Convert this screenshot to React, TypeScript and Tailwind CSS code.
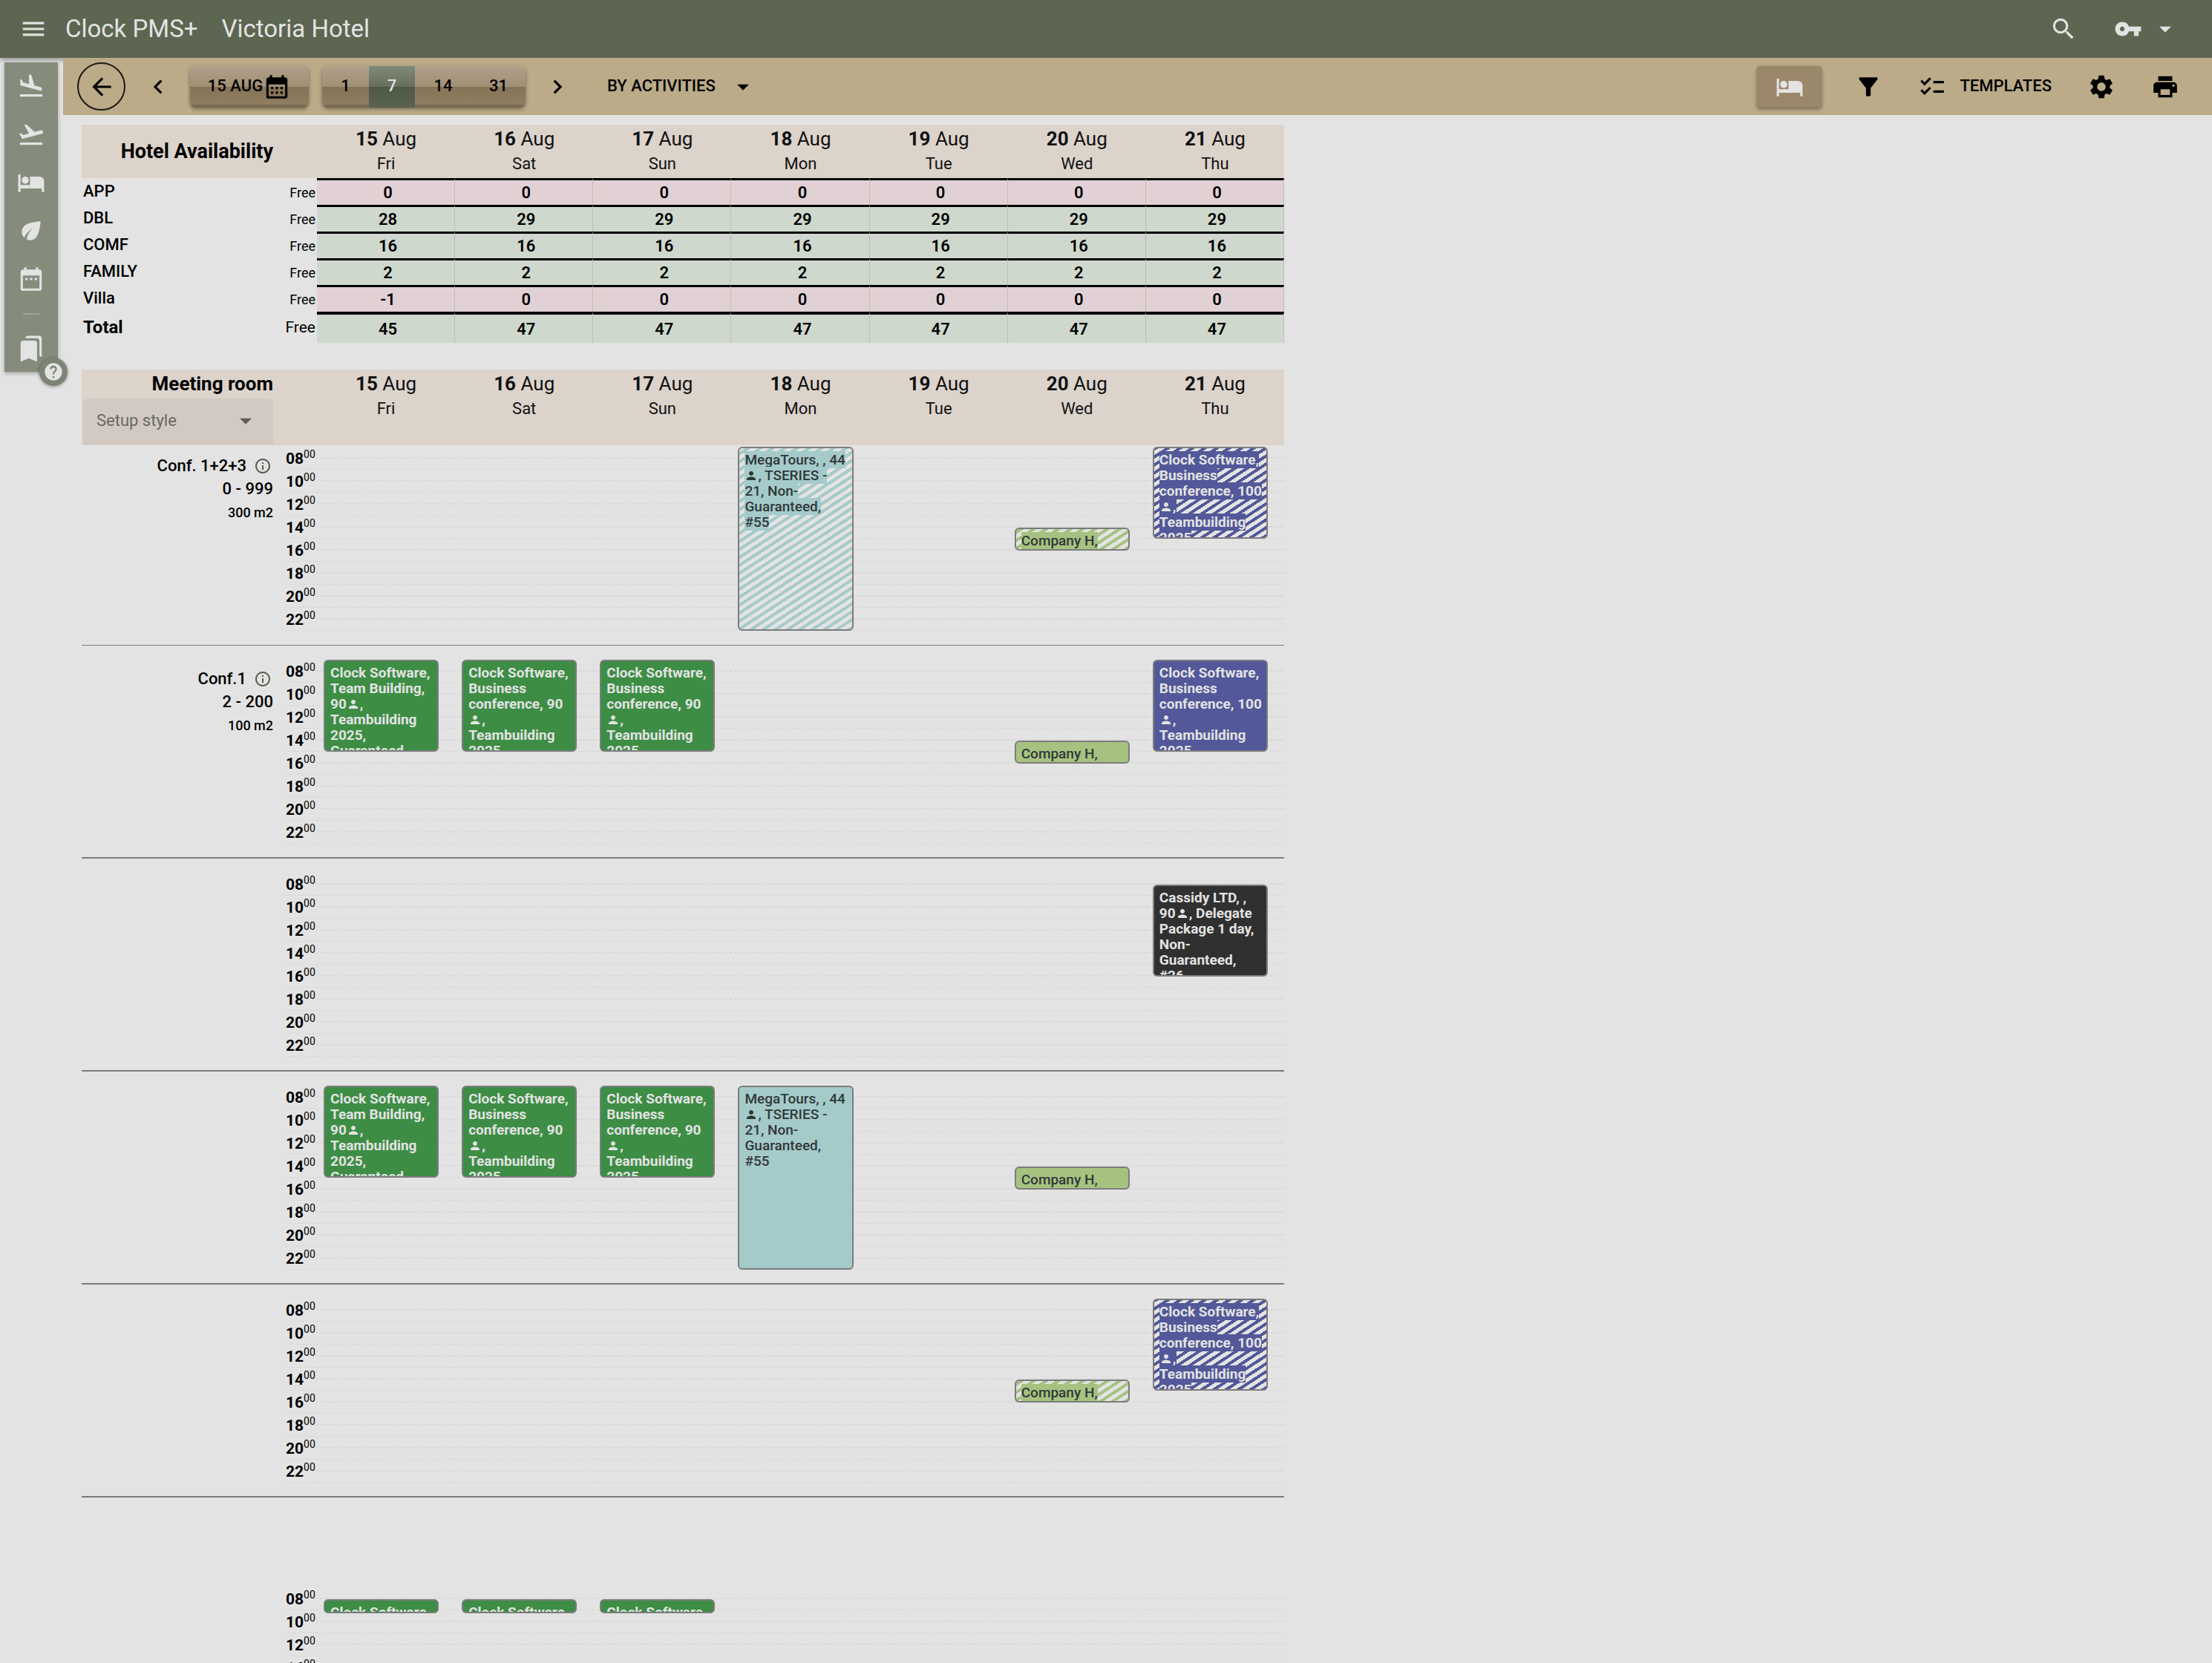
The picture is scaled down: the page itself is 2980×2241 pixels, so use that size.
import type { ReactNode } from "react";
import type { IconType } from "react-icons";
import {
  MdArrowBack,
  MdArrowDropDown,
  MdBookmarks,
  MdCalendarMonth,
  MdChecklist,
  MdChevronLeft,
  MdChevronRight,
  MdDateRange,
  MdEco,
  MdFilterAlt,
  MdFlightLand,
  MdFlightTakeoff,
  MdHelp,
  MdHotel,
  MdInfoOutline,
  MdMenu,
  MdPerson,
  MdPrint,
  MdSearch,
  MdSettings,
  MdVpnKey,
} from "react-icons/md";

const HOUR_HEIGHT = 15.5;
const DAY_START = 7;

const days = [
  { date: "15", weekday: "Fri" },
  { date: "16", weekday: "Sat" },
  { date: "17", weekday: "Sun" },
  { date: "18", weekday: "Mon" },
  { date: "19", weekday: "Tue" },
  { date: "20", weekday: "Wed" },
  { date: "21", weekday: "Thu" },
];

const availability = [
  { type: "APP", free: [0, 0, 0, 0, 0, 0, 0] },
  { type: "DBL", free: [28, 29, 29, 29, 29, 29, 29] },
  { type: "COMF", free: [16, 16, 16, 16, 16, 16, 16] },
  { type: "FAMILY", free: [2, 2, 2, 2, 2, 2, 2] },
  { type: "Villa", free: [-1, 0, 0, 0, 0, 0, 0] },
];

const totals = [45, 47, 47, 47, 47, 47, 47];

const hours = ["08", "10", "12", "14", "16", "18", "20", "22"];

type Tone = "green" | "blue" | "teal" | "lime" | "black";

type Booking = {
  day: number;
  from: number;
  to: number;
  tone: Tone;
  striped?: boolean;
  // "@" stands for the person icon
  lines: string[];
};

type Room = {
  name?: string;
  capacity?: string;
  area?: string;
  bookings: Booking[];
};

const teamBuilding = ["Clock Software,", "Team Building,", "90@,", "Teambuilding", "2025,", "Guaranteed"];
const conference90 = ["Clock Software,", "Business", "conference, 90", "@,", "Teambuilding", "2025"];
const conference100 = ["Clock Software,", "Business", "conference, 100", "@,", "Teambuilding", "2025"];
const megaTours = ["MegaTours, , 44", "@, TSERIES -", "21, Non-", "Guaranteed,", "#55"];
const cassidy = ["Cassidy LTD, ,", "90@, Delegate", "Package 1 day,", "Non-", "Guaranteed,", "#26"];

const rooms: Room[] = [
  {
    name: "Conf. 1+2+3",
    capacity: "0 - 999",
    area: "300 m2",
    bookings: [
      { day: 3, from: 7, to: 23, tone: "teal", striped: true, lines: megaTours },
      { day: 5, from: 14, to: 16, tone: "lime", striped: true, lines: ["Company H,"] },
      { day: 6, from: 7, to: 15, tone: "blue", striped: true, lines: conference100 },
    ],
  },
  {
    name: "Conf.1",
    capacity: "2 - 200",
    area: "100 m2",
    bookings: [
      { day: 0, from: 7, to: 15, tone: "green", lines: teamBuilding },
      { day: 1, from: 7, to: 15, tone: "green", lines: conference90 },
      { day: 2, from: 7, to: 15, tone: "green", lines: conference90 },
      { day: 5, from: 14, to: 16, tone: "lime", lines: ["Company H,"] },
      { day: 6, from: 7, to: 15, tone: "blue", lines: conference100 },
    ],
  },
  {
    bookings: [{ day: 6, from: 8, to: 16, tone: "black", lines: cassidy }],
  },
  {
    bookings: [
      { day: 0, from: 7, to: 15, tone: "green", lines: teamBuilding },
      { day: 1, from: 7, to: 15, tone: "green", lines: conference90 },
      { day: 2, from: 7, to: 15, tone: "green", lines: conference90 },
      { day: 3, from: 7, to: 23, tone: "teal", lines: megaTours },
      { day: 5, from: 14, to: 16, tone: "lime", lines: ["Company H,"] },
    ],
  },
  {
    bookings: [
      { day: 5, from: 14, to: 16, tone: "lime", striped: true, lines: ["Company H,"] },
      { day: 6, from: 7, to: 15, tone: "blue", striped: true, lines: conference100 },
    ],
  },
];

const lastRoom: Room = {
  bookings: [
    { day: 0, from: 8, to: 9.25, tone: "green", lines: ["Clock Software,"] },
    { day: 1, from: 8, to: 9.25, tone: "green", lines: ["Clock Software,"] },
    { day: 2, from: 8, to: 9.25, tone: "green", lines: ["Clock Software,"] },
  ],
};

const solidTone: Record<Tone, string> = {
  green: "bg-[#3d8d45]",
  blue: "bg-[#525899]",
  teal: "bg-[#a5caca]",
  lime: "bg-[#a6c280]",
  black: "bg-[#303030]",
};

const stripedTone: Record<Tone, string> = {
  green: "bg-[repeating-linear-gradient(-33deg,#3d8d45_0_4px,#e3e3e3_4px_9px)]",
  blue: "bg-[repeating-linear-gradient(-33deg,#525899_0_4px,#e3e3e3_4px_9px)]",
  teal: "bg-[repeating-linear-gradient(-33deg,#a5caca_0_4px,#e3e3e3_4px_9px)]",
  lime: "bg-[repeating-linear-gradient(-33deg,#a6c280_0_4px,#e3e3e3_4px_9px)]",
  black: "bg-[repeating-linear-gradient(-33deg,#303030_0_4px,#e3e3e3_4px_9px)]",
};

const toneText: Record<Tone, string> = {
  green: "font-bold text-[#e3e3e3]",
  blue: "font-bold text-[#e3e3e3]",
  teal: "font-medium text-[#303838]",
  lime: "font-medium text-[#303838]",
  black: "font-bold text-[#e3e3e3]",
};

function Header() {
  return (
    <header className="flex h-[78px] items-center bg-[#5c6650] pl-[26px] pr-[44px] text-[#e3e3e3] shadow-[0_3px_6px_rgba(0,0,0,0.35)]">
      <button type="button" aria-label="Menu">
        <MdMenu className="size-[38px]" />
      </button>
      <h1 className="flex flex-1 items-center gap-8 pl-6 text-[33px]">
        <span>Clock PMS+</span>
        <span>Victoria Hotel</span>
      </h1>
      <button type="button" aria-label="Search" className="mr-[49px]">
        <MdSearch className="size-[38px]" />
      </button>
      <button type="button" aria-label="Account" className="flex items-center gap-3">
        <MdVpnKey className="size-[38px]" />
        <MdArrowDropDown className="size-[38px]" />
      </button>
    </header>
  );
}

function SideLink({ icon: Icon, label }: { icon: IconType; label: string }) {
  return (
    <a href="#" aria-label={label}>
      <Icon className="size-[38px]" />
    </a>
  );
}

function Sidebar() {
  return (
    <aside className="w-[85px] shrink-0 pl-1.5 pt-1.5">
      <nav className="relative flex w-[72px] flex-col items-center gap-[27px] bg-[#858c7c] pb-3 pt-[13px] text-[#e3e3e3] shadow-[0_2px_5px_rgba(0,0,0,0.3)]">
        <SideLink icon={MdFlightLand} label="Arrivals" />
        <SideLink icon={MdFlightTakeoff} label="Departures" />
        <SideLink icon={MdHotel} label="Rooms" />
        <SideLink icon={MdEco} label="Housekeeping" />
        <SideLink icon={MdDateRange} label="Calendar" />
        <div className="h-0.5 w-[22px] bg-[#a3a69c]" />
        <SideLink icon={MdBookmarks} label="Bookmarks" />
        <button
          type="button"
          aria-label="Help"
          className="absolute -bottom-[19px] -right-[13px] flex size-[38px] items-center justify-center rounded-full bg-[#7d8474] shadow-[0_1px_4px_rgba(0,0,0,0.4)]"
        >
          <MdHelp className="size-7" />
        </button>
      </nav>
    </aside>
  );
}

const raised =
  "h-14 rounded-[8px] bg-[linear-gradient(#b0a18b_0%,#a18f74_50%,#867458_50%,#8f7d60_92%,#786a50_92%)] shadow-[0_2px_5px_rgba(0,0,0,0.4)]";

function Toolbar() {
  return (
    <div className="flex h-[77px] items-center bg-[#bbab88] pl-[19px] pr-[44px] text-[22px] font-medium text-black">
      <button
        type="button"
        aria-label="Back"
        className="mr-[25px] flex size-[65px] items-center justify-center rounded-full border-2 border-[#1c1a14]"
      >
        <MdArrowBack className="size-[38px]" />
      </button>
      <button type="button" aria-label="Previous">
        <MdChevronLeft className="size-[38px]" />
      </button>
      <button type="button" className={`ml-6 flex w-40 items-center justify-center ${raised}`}>
        <span className="pb-[3px]">15 AUG</span>
        <MdCalendarMonth className="size-[38px]" />
      </button>
      <div className={`ml-[18px] flex overflow-hidden ${raised}`}>
        <button type="button" className="w-[63px] pb-[3px]">1</button>
        <button
          type="button"
          className="w-[62px] bg-[linear-gradient(#818a79_0%,#65705a_50%,#4f5a46_50%,#59634f_100%)] pb-[3px] text-[#e3e3e3]"
        >
          7
        </button>
        <button type="button" className="w-[76px] pb-[3px]">14</button>
        <button type="button" className="w-[73px] pb-[3px]">31</button>
      </div>
      <button type="button" aria-label="Next" className="ml-6">
        <MdChevronRight className="size-[38px]" />
      </button>
      <button type="button" className="ml-12 flex items-center gap-[18px]">
        <span className="pb-[3px]">BY ACTIVITIES</span>
        <MdArrowDropDown className="size-[38px]" />
      </button>
      <div className="ml-auto flex items-center">
        <button
          type="button"
          aria-label="Show availability"
          className="flex h-14 w-[87px] items-center justify-center rounded bg-[#9b8769] text-[#e3e3e3] shadow-[0_2px_5px_rgba(0,0,0,0.4)]"
        >
          <MdHotel className="size-[38px]" />
        </button>
        <button type="button" aria-label="Filter" className="ml-11">
          <MdFilterAlt className="size-[38px]" />
        </button>
        <button type="button" className="ml-12 flex items-center gap-[18px]">
          <MdChecklist className="size-[38px]" />
          <span className="pb-[3px]">TEMPLATES</span>
        </button>
        <button type="button" aria-label="Settings" className="ml-12">
          <MdSettings className="size-[38px]" />
        </button>
        <button type="button" aria-label="Print" className="ml-12">
          <MdPrint className="size-[38px]" />
        </button>
      </div>
    </div>
  );
}

function DayLabel({ date, weekday }: { date: string; weekday: string }) {
  return (
    <div className="pt-[3px] text-center font-normal text-[#111]">
      <div className="text-[26px] leading-8">
        <b>{date}</b> Aug
      </div>
      <div className="text-[22px] leading-9">{weekday}</div>
    </div>
  );
}

function AvailabilityTable() {
  return (
    <table className="w-[1620px] table-fixed border-separate border-spacing-0">
      <thead>
        <tr className="h-[72px] bg-[#dcd3cb]">
          <th className="w-[258px] p-0 text-right text-[27px] font-bold">Hotel Availability</th>
          <th className="w-[59px] p-0" />
          {days.map((day) => (
            <th key={day.date} className="p-0 align-top">
              <DayLabel {...day} />
            </th>
          ))}
        </tr>
      </thead>
      <tbody>
        {availability.map((row) => (
          <tr key={row.type} className="h-9">
            <th className="p-0 pl-0.5 text-left text-[22px] font-medium leading-8">{row.type}</th>
            <td className="p-0 pr-0.5 pt-[3px] text-right text-[18px] leading-8">Free</td>
            {row.free.map((count, i) => (
              <td
                key={days[i].date}
                className={`border-r border-t-[3px] border-r-[#bbbfb9] border-t-black p-0 pl-1.5 text-center text-[22px] font-semibold leading-8 ${
                  count > 0 ? "bg-[#cfd8cd]" : "bg-[#e1d1d4]"
                }`}
              >
                {count}
              </td>
            ))}
          </tr>
        ))}
      </tbody>
      <tfoot>
        <tr className="h-[42px]">
          <th className="p-0 pl-0.5 text-left text-[24px] font-bold leading-9">Total</th>
          <td className="p-0 pr-0.5 text-right text-[21px] leading-9">Free</td>
          {totals.map((count, i) => (
            <td
              key={days[i].date}
              className="border-r border-t-4 border-r-[#bbbfb9] border-t-black bg-[#cfd8cd] p-0 pl-1.5 pt-0.5 text-center text-[22px] font-semibold leading-9"
            >
              {count}
            </td>
          ))}
        </tr>
      </tfoot>
    </table>
  );
}

function BookingLine({ text, fill }: { text: string; fill: string }) {
  const [before, after] = text.split("@");
  let content: ReactNode = text;
  if (after !== undefined) {
    content = (
      <>
        {before}
        <MdPerson className="inline size-[18px] align-[-3px]" />
        {after}
      </>
    );
  }
  return (
    <div className="whitespace-nowrap">
      <span className={fill}>{content}</span>
    </div>
  );
}

function BookingCard({ booking }: { booking: Booking }) {
  const { tone, striped, lines } = booking;
  return (
    <a
      href="#"
      className={`absolute inset-x-0 ml-[9px] mr-[22px] overflow-hidden rounded-[6px] border-2 border-[#7c7c7c] pl-[7px] pt-[5px] text-[19px] leading-[21px] ${toneText[tone]} ${
        striped ? stripedTone[tone] : solidTone[tone]
      }`}
      style={{
        top: (booking.from - DAY_START) * HOUR_HEIGHT,
        height: (booking.to - booking.from) * HOUR_HEIGHT,
      }}
    >
      {lines.map((line) => (
        <BookingLine key={line} text={line} fill={striped ? solidTone[tone] : ""} />
      ))}
    </a>
  );
}

function RoomRow({ room, className }: { room: Room; className: string }) {
  return (
    <section className={`flex pb-[18px] ${className}`}>
      <div className="w-[258px] pt-2.5 text-right text-[22px] font-medium leading-[31px]">
        {room.name && (
          <>
            <div className="flex items-center justify-end gap-2.5 pr-0.5">
              {room.name}
              <MdInfoOutline className="size-6 text-[#555b50]" />
            </div>
            <div>{room.capacity}</div>
            <div className="text-[18px] leading-[34px]">{room.area}</div>
          </>
        )}
      </div>
      <div className="w-[59px] pl-[17px]">
        {hours.map((hour) => (
          <div key={hour} className="flex h-[31px] items-start border-b border-dotted border-[#d3d3d8]">
            <span className="text-[21px] font-bold leading-8">{hour}</span>
            <span className="text-[14px] leading-5">00</span>
          </div>
        ))}
      </div>
      {days.map((day, i) => (
        <div key={day.date} className="relative flex-1">
          {hours.map((hour) => (
            <div key={hour} className="flex h-[31px] flex-col border-b border-dotted border-[#d3d3d8]">
              <div className="h-4 border-b-2 border-dotted border-[#d6d6da]" />
            </div>
          ))}
          {room.bookings
            .filter((booking) => booking.day === i)
            .map((booking) => (
              <BookingCard key={booking.from} booking={booking} />
            ))}
        </div>
      ))}
    </section>
  );
}

function MeetingRooms() {
  return (
    <div className="mt-9 w-[1620px]">
      <div className="flex h-[102px] bg-[#dcd3cb]">
        <div className="w-[258px] pl-0.5 pt-[3px]">
          <label htmlFor="setup-style" className="block text-right text-[26px] font-bold leading-8">
            Meeting room
          </label>
          <div className="relative mt-1">
            <select
              id="setup-style"
              className="h-[62px] w-full appearance-none rounded-t-[6px] bg-[#d2c9c2] pb-[3px] pl-[18px] text-[22px] text-[#686863]"
            >
              <option>Setup style</option>
            </select>
            <MdArrowDropDown className="pointer-events-none absolute right-[18px] top-[11px] size-[38px] text-[#5c5c58]" />
          </div>
        </div>
        <div className="w-[59px]" />
        {days.map((day) => (
          <div key={day.date} className="flex-1">
            <DayLabel {...day} />
          </div>
        ))}
      </div>
      {rooms.map((room, i) => (
        <RoomRow
          key={i}
          room={room}
          className={
            i === 0
              ? "h-[270px] border-b border-[#7b7b7b] pt-0.5"
              : "h-[287px] border-b-2 border-[#7b7b7b] pt-[19px]"
          }
        />
      ))}
      <RoomRow room={lastRoom} className="pt-[121px]" />
    </div>
  );
}

export default function App() {
  return (
    <div className="flex h-screen flex-col overflow-hidden bg-[#e3e3e3] font-[Roboto,sans-serif] text-black">
      <Header />
      <div className="flex min-h-0 flex-1">
        <Sidebar />
        <div className="min-w-0 flex-1">
          <Toolbar />
          <main className="pl-[25px] pt-[13px]">
            <AvailabilityTable />
            <MeetingRooms />
          </main>
        </div>
      </div>
    </div>
  );
}
